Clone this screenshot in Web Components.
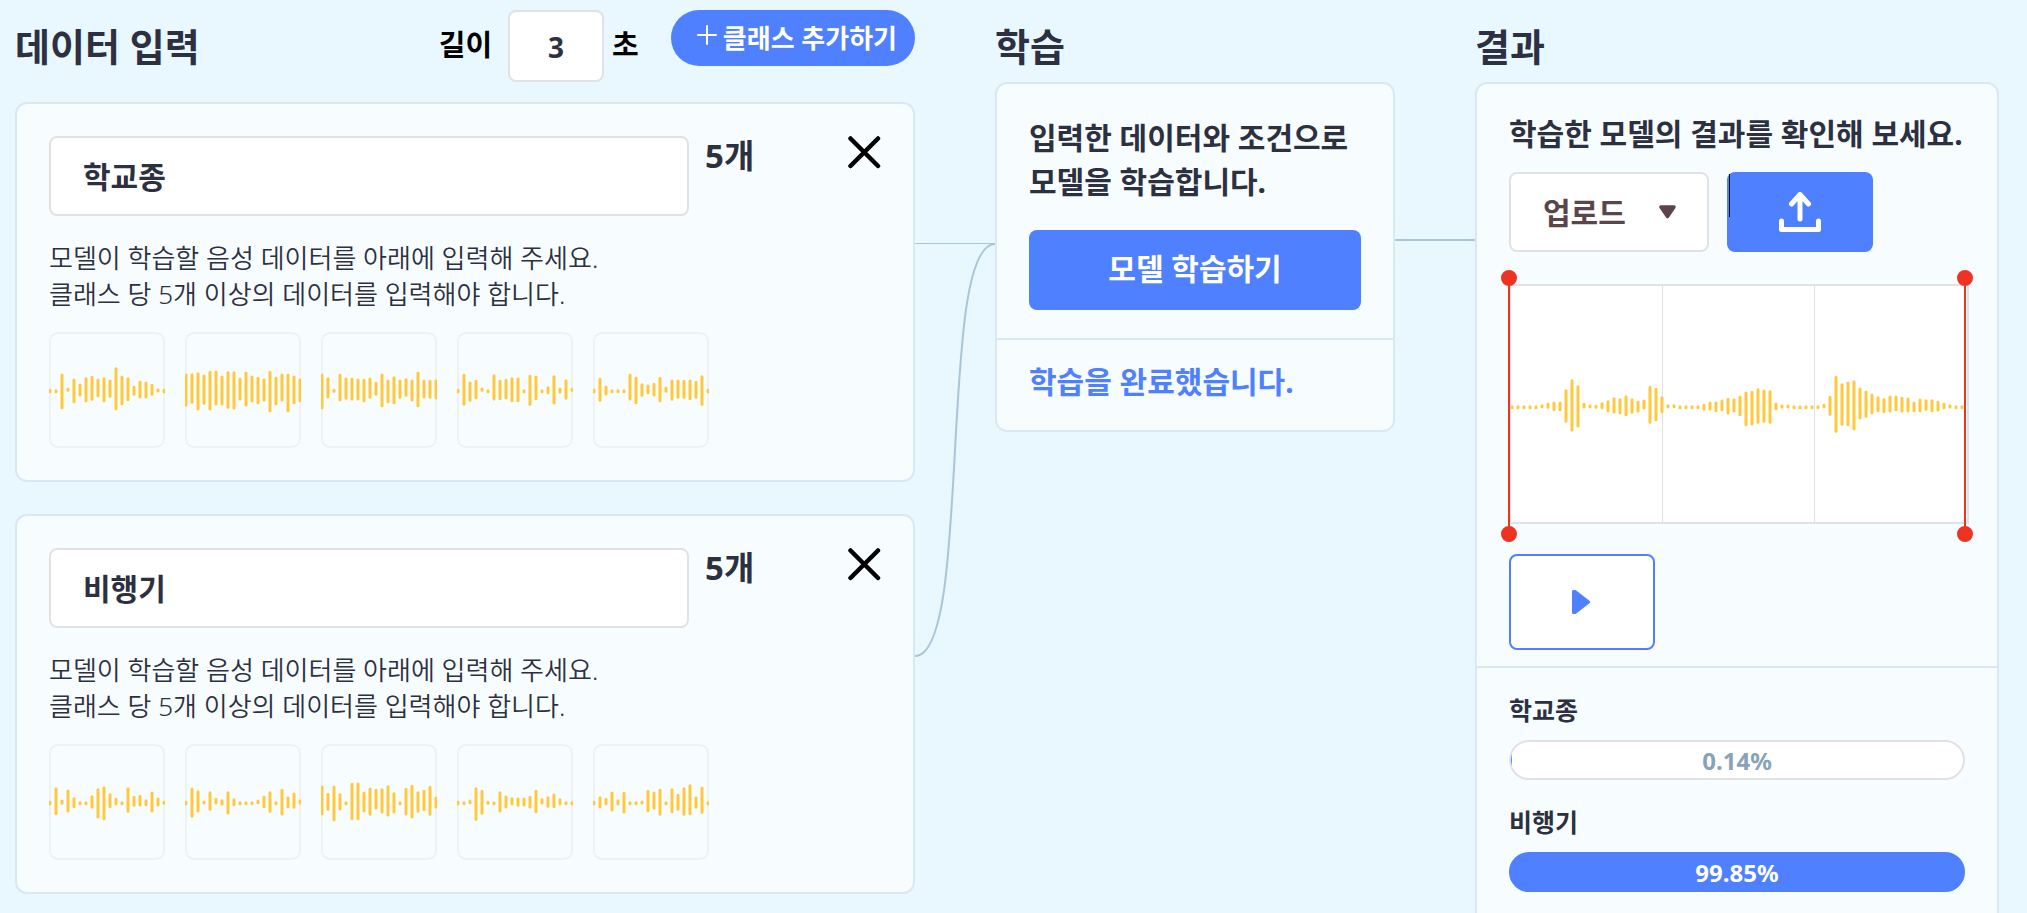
<!DOCTYPE html>
<html lang="ko">
<head>
<meta charset="utf-8">
<title>음성 모델 학습</title>
<style>
  html, body { margin: 0; height: 100%; }
  body {
    overflow: hidden;
    background: #e9f7ff;
    color: #2d3040;
    font-family: "Noto Sans", "Noto Sans CJK KR", sans-serif;
    --accent: #4f80ff;
    --card: #f7fdff;
    --card-line: #d8e8f4;
    --line: #e2e2e2;
    --wire: #abc5d8;
    --wave: #ffc83d;
  }
</style>
</head>
<body>
<learning-board></learning-board>

<script>
const define = (name, html, setup) => {
  const tpl = document.createElement('template');
  tpl.innerHTML = `<style>*{box-sizing:border-box}button,input,select{font:inherit;color:inherit;margin:0}:focus-visible{outline:2px solid #2d3040}</style>` + html;
  customElements.define(name, class extends HTMLElement {
    constructor() {
      super();
      this.attachShadow({ mode: 'open' }).append(tpl.content.cloneNode(true));
    }
    connectedCallback() { if (setup) setup(this, this.shadowRoot); }
  });
};

/* Bars are "up/down" pairs around a baseline, in thirds of a pixel, one every 6px. */
const bars = (data, x0, base) => data.trim().split(/[\s,]+/).map((pair, i) => {
  const [up, down] = pair.split('/').map(Number);
  const x = x0 + i * 6;
  const top = base - up / 3 + 1, bottom = Math.max(base + down / 3 - 1, top + 1);
  return `M${x} ${top.toFixed(1)}V${bottom.toFixed(1)}`;
}).join('');

define('panel-card', `
  <style>
    :host { display: block; background: var(--card); border: 2px solid var(--card-line); border-radius: 12px; }
    .body { padding: var(--card-pad, 32px); }
    .foot { border-top: 2px solid var(--card-line); padding: var(--foot-pad, 20px 32px 26px); }
    .foot.empty { display: none; }
  </style>
  <div class="body"><slot></slot></div>
  <div class="foot"><slot name="foot"></slot></div>`,
  (host, root) => {
    root.querySelector('.foot').classList.toggle('empty', !host.querySelector('[slot=foot]'));
  });

define('column-head', `
  <style>
    :host { display: flex; justify-content: space-between; height: 72px; }
    h2 { margin: 0; font-size: 38px; line-height: 72px; font-weight: 700; white-space: nowrap; }
  </style>
  <h2><slot></slot></h2>
  <slot name="tools"></slot>`);

define('wave-thumb', `
  <style>
    :host { display: block; width: 116px; height: 116px; flex: none; }
    svg { display: block; }
  </style>
  <svg width="116" height="116" viewBox="0 0 116 116" aria-hidden="true">
    <rect x="1" y="1" width="114" height="114" rx="8" fill="none" stroke="#edf2f5" stroke-width="2"/>
    <path fill="none" stroke="var(--wave)" stroke-width="3" stroke-linecap="round"/>
  </svg>`,
  (host, root) => root.querySelector('path').setAttribute('d', bars(host.getAttribute('data'), 1, 59)));

define('class-card', `
  <style>
    :host { display: block; }
    .top { display: flex; align-items: flex-start; }
    input { flex: 0 1 640px; min-width: 0; height: 80px; padding: 0 32px 2px; border: 2px solid var(--line); border-radius: 8px; background: #fff; font-size: 30px; font-weight: 700; }
    .count { flex: 1; padding-left: 16px; font-size: 33px; line-height: 40px; font-weight: 700; white-space: nowrap; }
    button { flex: none; width: 34px; height: 34px; padding: 0; border: 0; background: none; color: #000; }
    svg { display: block; }
    p { margin: 24px 0 20px; font-size: 26px; line-height: 36px; font-weight: 350; }
    .thumbs { display: flex; gap: 20px; }
  </style>
  <panel-card>
    <div class="top">
      <input aria-label="클래스 이름">
      <span class="count"></span>
      <button aria-label="삭제"><svg width="34" height="34" viewBox="0 0 34 34"><path d="M3.500 2.500 31 30M31 2.500 3.500 30" stroke="currentColor" stroke-width="4.500" stroke-linecap="round"/></svg></button>
    </div>
    <p>모델이 학습할 음성 데이터를 아래에 입력해 주세요.<br>클래스 당 5개 이상의 데이터를 입력해야 합니다.</p>
    <div class="thumbs"></div>
  </panel-card>`,
  (host, root) => {
    const waves = host.getAttribute('waves').split('|');
    root.querySelector('input').value = host.getAttribute('name');
    root.querySelector('.count').textContent = waves.length + '개';
    root.querySelector('.thumbs').innerHTML = waves.map(w => `<wave-thumb data="${w}"></wave-thumb>`).join('');
  });

define('data-tools', `
  <style>
    :host { display: flex; align-items: flex-start; }
    label { display: flex; align-items: flex-start; color: #000; font-size: 29px; line-height: 70px; font-weight: 700; white-space: nowrap; }
    input { width: 96px; height: 72px; margin: 0 8px 0 16px; padding: 2px 0 0; border: 2px solid var(--line); border-radius: 8px; background: #fff; color: #2d3040; font-size: 28px; text-align: center; }
    button { display: flex; gap: 6px; align-items: center; height: 56px; margin-left: 32px; padding: 0 18px 2px 26px; border: 0; border-radius: 28px; background: var(--accent); color: #fff; font-size: 26px; font-weight: 700; white-space: nowrap; }
  </style>
  <label>길이<input value="3" inputmode="numeric">초</label>
  <button><svg width="20" height="24" viewBox="0 0 20 24"><path d="M10 1v18M1 10h18" stroke="#fff" stroke-width="2" stroke-linecap="round"/></svg>클래스 추가하기</button>`);

define('train-panel', `
  <style>
    :host { display: block; }
    p { margin: 0; font-size: 30px; line-height: 44px; font-weight: 700; white-space: nowrap; }
    button { display: block; width: 100%; height: 80px; margin: 26px 0 -4px; padding: 0 0 6px; border: 0; border-radius: 8px; background: var(--accent); color: #fff; font-size: 30px; font-weight: 700; }
    .done { color: var(--accent); }
  </style>
  <panel-card>
    <p>입력한 데이터와 조건으로<br>모델을 학습합니다.</p>
    <button>모델 학습하기</button>
    <p class="done" slot="foot">학습을 완료했습니다.</p>
  </panel-card>`);

define('wave-range', `
  <style>
    :host { display: block; }
    svg { display: block; width: 100%; height: 240px; overflow: visible; }
  </style>
  <svg viewBox="0 0 456 240" preserveAspectRatio="none" role="img" aria-label="음성 파형">
    <rect x="1" y="1" width="458" height="238" fill="#fff" stroke="var(--line)" stroke-width="2"/>
    <path d="M153.500 2v236M305.500 2v236" stroke="var(--line)"/>
    <path class="wave" fill="none" stroke="var(--wave)" stroke-width="3" stroke-linecap="round"/>
    <g fill="#ee3322" stroke="#ee3322" stroke-width="2">
      <path d="M0-6V250M456-6V250"/>
      <circle cx="0" cy="-6" r="7"/><circle cx="0" cy="250" r="7"/>
      <circle cx="456" cy="-6" r="7"/><circle cx="456" cy="250" r="7"/>
    </g>
  </svg>`,
  (host, root) => root.querySelector('.wave').setAttribute('d', bars(`
    4/4,4/4,4/4,4/4,4/4,7/2,12/4,15/11,15/11,52/46,82/72,64/60,11/3,7/2,5/3,13/5,19/15,28/18,25/20,34/26,
    25/19,17/15,21/6,62/49,56/41,31/17,7/3,7/2,4/4,4/4,4/4,4/4,8/10,15/9,15/14,21/11,26/21,25/15,33/26,45/56,
    47/54,55/49,51/46,49/49,12/8,6/3,6/3,4/4,4/4,4/4,4/4,4/4,8/2,32/25,92/76,70/55,75/56,79/69,57/36,48/31,
    39/20,31/14,25/17,33/15,33/11,29/15,27/15,15/14,24/14,22/10,22/14,17/12,12/5,7/3,4/4,4/4`, 3, 123)));

define('score-bar', `
  <style>
    :host { display: block; }
    .name { font-size: 25px; line-height: 36px; font-weight: 700; }
    .track { display: grid; height: 40px; margin-top: 12px; border: 2px solid var(--line); border-radius: 20px; background: #fff; color: #86a3b8; overflow: hidden; }
    .track.high { border-color: var(--accent); background: var(--accent); color: #fff; }
    .fill, .value { grid-area: 1 / 1; }
    .fill { background: var(--accent); }
    .value { font-size: 24px; line-height: 38px; font-weight: 700; text-align: center; }
  </style>
  <div class="name"></div>
  <div class="track" role="progressbar"><span class="fill"></span><span class="value"></span></div>`,
  (host, root) => {
    const v = host.getAttribute('value'), track = root.querySelector('.track');
    root.querySelector('.name').textContent = host.getAttribute('name');
    root.querySelector('.value').textContent = v + '%';
    root.querySelector('.fill').style.width = v + '%';
    track.setAttribute('aria-valuenow', v);
    track.setAttribute('aria-label', host.getAttribute('name'));
    track.classList.toggle('high', v > 50);
  });

define('result-panel', `
  <style>
    :host { display: block; }
    panel-card { --card-pad: 28px 32px 16px; --foot-pad: 24px 32px 60px; }
    p { margin: 0; font-size: 30px; line-height: 44px; font-weight: 700; white-space: nowrap; }
    .source { display: flex; gap: 18px; margin: 16px 0 32px; }
    .pick { display: grid; width: 200px; align-items: center; }
    .pick > * { grid-area: 1 / 1; }
    select { appearance: none; width: 100%; height: 80px; padding: 0 32px; border: 2px solid var(--line); border-radius: 8px; background: #fff; color: #5b444a; font-size: 30px; font-weight: 700; }
    .pick svg { justify-self: end; margin-right: 33px; pointer-events: none; }
    .upload { position: relative; display: grid; place-items: center; width: 146px; height: 80px; padding: 0; border: 0; border-radius: 8px; background: var(--accent); }
    .caret { position: absolute; left: 2px; top: 2px; width: 1px; height: 43px; background: #000; }
    .play { display: grid; place-items: center; width: 146px; height: 96px; margin-top: 30px; padding: 0 2px 0 0; border: 2px solid var(--accent); border-radius: 8px; background: #fff; }
    .scores { display: grid; gap: 24px; }
  </style>
  <panel-card>
    <p>학습한 모델의 결과를 확인해 보세요.</p>
    <div class="source">
      <div class="pick">
        <select aria-label="입력 방식"><option>업로드</option></select>
        <svg width="17" height="14" viewBox="0 0 17 14"><path d="M2 2h13L8.500 11.500Z" fill="#5b444a" stroke="#5b444a" stroke-width="3.500" stroke-linejoin="round"/></svg>
      </div>
      <button class="upload" aria-label="파일 업로드"><span class="caret"></span>
        <svg width="42" height="40" viewBox="0 0 42 40" fill="none" stroke="#fff" stroke-width="5" stroke-linecap="round" stroke-linejoin="round"><path d="M21 27V3M12.500 12 21 2.500 29.500 12M2.500 29v8.500h37V29"/></svg>
      </button>
    </div>
    <wave-range></wave-range>
    <button class="play" aria-label="재생"><svg width="18" height="24" viewBox="0 0 18 24"><path d="M1.500 1.500h1.500L16.500 12 3 22.500H1.500Z" fill="#4f80ff" stroke="#4f80ff" stroke-width="3" stroke-linejoin="round"/></svg></button>
    <div class="scores" slot="foot">
      <score-bar name="학교종" value="0.14"></score-bar>
      <score-bar name="비행기" value="99.85"></score-bar>
    </div>
  </panel-card>`);

define('flow-link', `
  <style>
    :host { display: block; }
    svg { display: block; width: 100%; height: 700px; }
  </style>
  <svg viewBox="0 0 80 700" preserveAspectRatio="none" fill="none" stroke="var(--wire)" aria-hidden="true"></svg>`,
  (host, root) => {
    root.querySelector('svg').innerHTML = host.hasAttribute('merge')
      ? '<path d="M0 243.500H80"/><path stroke-width="2" d="M0 656C58 656 22 244 80 244"/>'
      : '<path stroke-width="2" d="M0 240H80"/>';
  });

define('learning-board', `
  <style>
    :host { display: block; padding: 0 28px 0 15px; }
    main { display: grid; grid-template-columns: minmax(0, 900fr) 80px minmax(0, 400fr) 80px minmax(0, 524fr); align-items: start; }
    section { padding-top: 10px; }
    .classes { display: grid; gap: 32px; margin-top: 20px; }
  </style>
  <main>
    <section>
      <column-head>데이터 입력<data-tools slot="tools"></data-tools></column-head>
      <div class="classes">
        <class-card name="학교종" waves="5/5,4/4,51/53,9/1,36/35,21/15,40/32,44/28,36/17,40/32,33/19,70/56,45/41,40/29,14/13,30/21,27/21,20/13,7/3,5/5|51/45,52/37,55/57,48/40,59/57,60/42,45/42,58/52,58/54,39/27,57/45,45/33,41/38,37/30,59/62,42/41,51/30,51/62,45/38,36/32|51/53,40/21,5/4,50/29,39/25,39/27,36/27,35/32,39/22,26/13,51/47,33/35,43/38,33/22,37/16,33/30,57/47,33/21,32/22,33/23|5/5,50/43,27/31,32/23,9/1,4/4,49/27,32/26,35/23,40/32,39/32,4/4,47/43,45/26,4/4,13/8,46/39,9/6,34/25,8/1|5/5,38/31,15/12,4/4,4/4,4/4,51/27,42/38,22/16,18/8,23/15,41/32,12/4,33/28,33/22,32/22,33/26,29/22,46/43,5/5"></class-card>
        <class-card name="비행기" waves="5/5,46/35,9/4,39/27,16/14,4/3,4/3,22/15,43/45,49/50,28/14,14/6,4/3,46/28,20/10,23/9,10/8,33/27,15/9,5/3|5/5,45/43,37/27,6/3,34/22,14/3,10/6,34/33,13/8,4/3,4/3,4/3,9/2,21/14,34/28,4/3,41/36,18/14,30/16,9/3|51/35,29/22,51/53,28/21,4/2,59/50,60/50,33/27,45/37,41/18,43/30,52/39,31/30,4/2,44/36,53/45,34/28,39/23,50/37,18/15|5/5,4/3,9/2,46/52,38/34,5/3,4/2,34/27,21/15,16/5,15/10,15/9,20/15,38/29,13/3,19/13,27/14,13/6,4/3,4/4|5/5,19/14,14/5,33/24,10/6,32/30,4/3,4/3,6/1,38/26,33/19,41/37,4/3,43/29,26/22,46/37,55/35,18/15,48/31,4/4"></class-card>
      </div>
    </section>
    <flow-link merge></flow-link>
    <section>
      <column-head>학습</column-head>
      <train-panel></train-panel>
    </section>
    <flow-link></flow-link>
    <section>
      <column-head>결과</column-head>
      <result-panel></result-panel>
    </section>
  </main>`);
</script>
</body>
</html>
